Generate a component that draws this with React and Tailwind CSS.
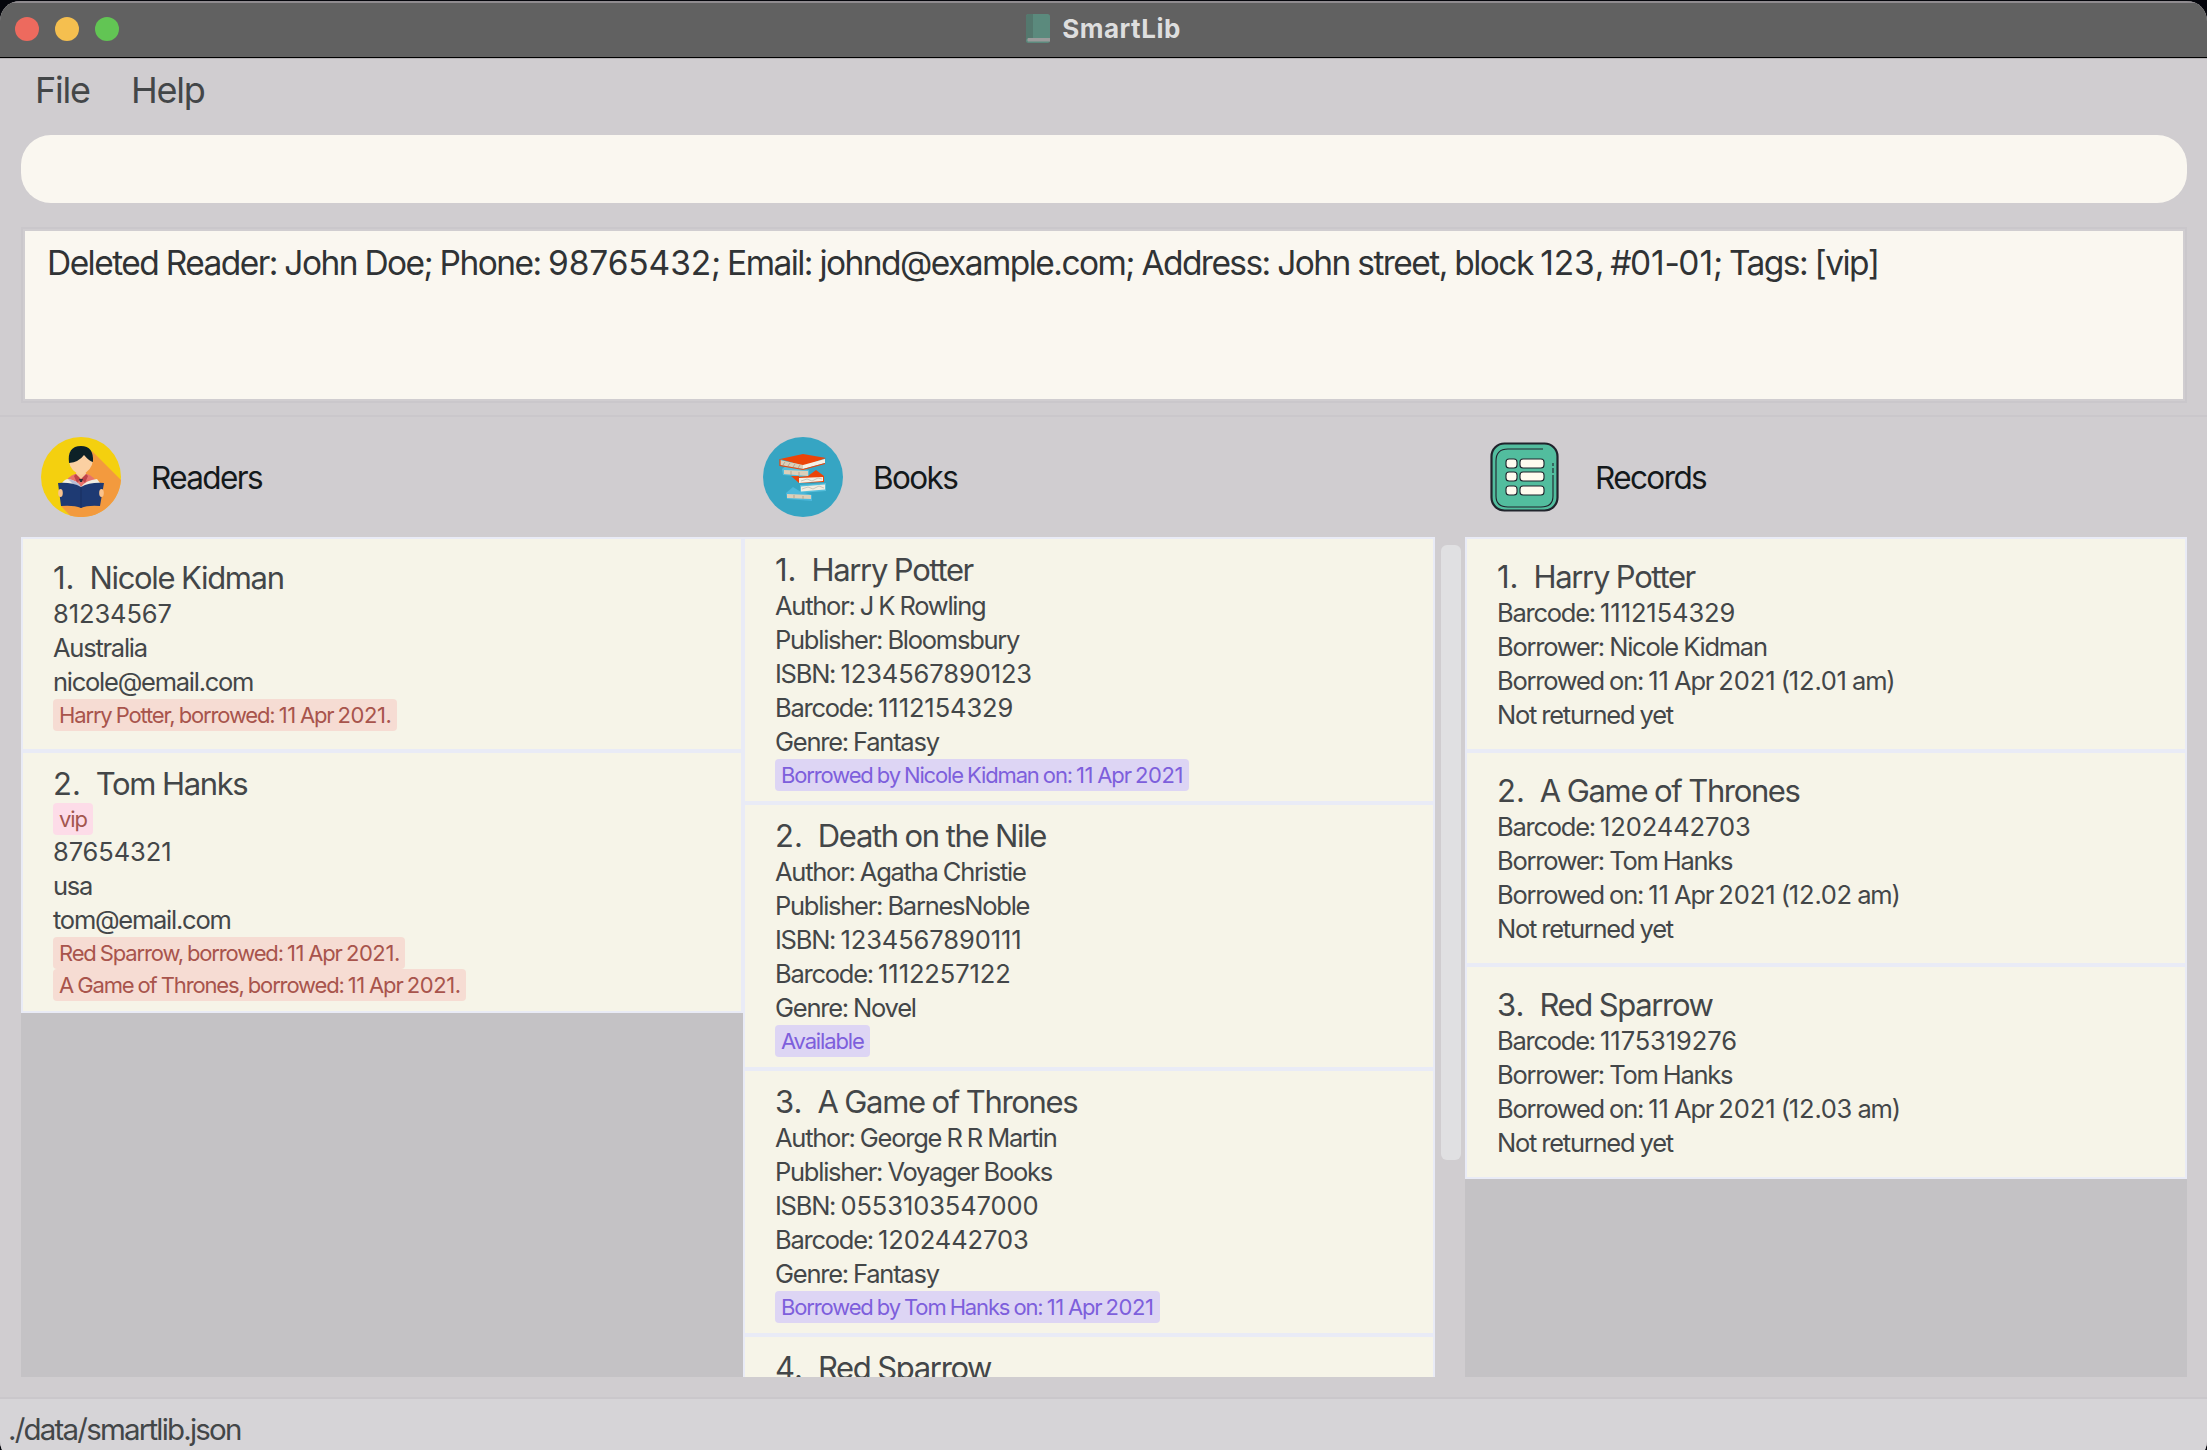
const readers = [
  {
    name: "Nicole Kidman",
    pad: "pt-[20px]",
    height: "h-[214px]",
    tags: [],
    lines: ["81234567", "Australia", "nicole@email.com"],
    loans: ["Harry Potter, borrowed: 11 Apr 2021."],
  },
  {
    name: "Tom Hanks",
    pad: "pt-[12px]",
    height: "h-[262px]",
    tags: ["vip"],
    lines: ["87654321", "usa", "tom@email.com"],
    loans: ["Red Sparrow, borrowed: 11 Apr 2021.", "A Game of Thrones, borrowed: 11 Apr 2021."],
  },
];

const books = [
  {
    name: "Harry Potter",
    lines: ["Author: J K Rowling", "Publisher: Bloomsbury", "ISBN: 1234567890123", "Barcode: 1112154329", "Genre: Fantasy"],
    status: "Borrowed by Nicole Kidman on: 11 Apr 2021",
  },
  {
    name: "Death on the Nile",
    lines: ["Author: Agatha Christie", "Publisher: BarnesNoble", "ISBN: 1234567890111", "Barcode: 1112257122", "Genre: Novel"],
    status: "Available",
  },
  {
    name: "A Game of Thrones",
    lines: ["Author: George R R Martin", "Publisher: Voyager Books", "ISBN: 0553103547000", "Barcode: 1202442703", "Genre: Fantasy"],
    status: "Borrowed by Tom Hanks on: 11 Apr 2021",
  },
  { name: "Red Sparrow", lines: [], status: null },
];

const records = [
  { name: "Harry Potter", lines: ["Barcode: 1112154329", "Borrower: Nicole Kidman", "Borrowed on: 11 Apr 2021 (12.01 am)", "Not returned yet"] },
  { name: "A Game of Thrones", lines: ["Barcode: 1202442703", "Borrower: Tom Hanks", "Borrowed on: 11 Apr 2021 (12.02 am)", "Not returned yet"] },
  { name: "Red Sparrow", lines: ["Barcode: 1175319276", "Borrower: Tom Hanks", "Borrowed on: 11 Apr 2021 (12.03 am)", "Not returned yet"] },
];

// Letters are set tight while runs of digits keep a looser tracking.
function Spaced({ text, digits }) {
  return text.split(/(\d+)/).map((part, i) =>
    i % 2 ? <span key={i} className={digits}>{part}</span> : part
  );
}

function Title({ index, name }) {
  return (
    <div className="flex h-[38px] gap-[15px] text-[31px] leading-[38px]">
      <span>{index}.</span>
      <span className="tracking-[-1.35px] [word-spacing:-0.5px]">{name}</span>
    </div>
  );
}

function Line({ children }) {
  return (
    <div className="h-[34px] text-[25.5px] leading-[34px] tracking-[-1.25px] [word-spacing:-0.7px]">
      <Spaced text={children} digits="tracking-[-0.1px]" />
    </div>
  );
}

function Tag({ children, tone }) {
  return (
    <div className="flex h-8">
      <span className={`rounded-[4px] px-[6px] text-[22px] leading-[32px] tracking-[-1.15px] [word-spacing:-0.9px] ${tone}`}>
        <Spaced text={children} digits="tracking-[-0.4px]" />
      </span>
    </div>
  );
}

function Card({ className, children }) {
  return (
    <article className={`shrink-0 border-2 border-[#e9ebf6] bg-[#f6f4e8] pl-[30px] ${className}`}>{children}</article>
  );
}

function ReaderIcon() {
  return (
    <svg viewBox="0 0 80 80" className="size-20">
      <circle cx="40" cy="40" r="40" fill="#f4d00f" />
      <path d="M51 14 L80 43 A40 40 0 0 1 29 78.500 L20 69 Z" fill="#f39a3e" />
      <path d="M24 47 Q27 39 34 37 L46 37 Q53 39 56 47 L40 54Z" fill="#e8736b" />
      <path d="M35 36h10v3l-5 5-5-5z" fill="#f9c99a" />
      <path d="M35 37l5 5-4 4-3-7zM45 37l-5 5 4 4 3-7z" fill="#c0444a" />
      <path d="M38 42h4l-1 3h-2z" fill="#2c2f38" />
      <path d="M28 21 Q28 10 40 10 Q52 10 52 23 Q51 34 40 38 Q29 34 28 24Z" fill="#fbd0a2" />
      <path d="M28 26 Q26 9 40 9 Q53 9 52 25 Q48 24 43 18 Q38 25 28 26Z" fill="#0d2127" />
      <path d="M21 46 Q24 42 27 42 Q36 43 40 50 Q45 43 56 42 L59 46 L40 52Z" fill="#f2efe2" />
      <path d="M27 42 Q36 43 40 50 L32 47 Z" fill="#b9bdd6" />
      <path d="M17 46 Q31 45 40 50 Q49 45 63 46 L59 69 Q47 68 40 71 Q33 68 20 69Z" fill="#1e3a73" />
      <path d="M40 50v21" stroke="#182f60" strokeWidth="1" />
      <ellipse cx="19.500" cy="56" rx="2.300" ry="4" fill="#fbc38c" />
      <ellipse cx="60.500" cy="56" rx="2.300" ry="4" fill="#fbc38c" />
    </svg>
  );
}

function BooksIcon() {
  return (
    <svg viewBox="0 0 80 80" className="size-20">
      <circle cx="40" cy="40" r="40" fill="#36a5c3" />
      <path d="M19 32l4-3 23 4v7l-26-2z" fill="#55bedb" />
      <path d="M21 33l24 1v5l-24-2z" fill="#dccfb9" />
      <path d="M17 22L40 17l23 4-22 8z" fill="#ec4408" />
      <path d="M17 23l23 5v4l-23-4z" fill="#dccfb9" />
      <path d="M40 28l22-6v4l-22 6z" fill="#f5f1e6" />
      <path d="M17 22v6.500l23 4L62 26.500" fill="none" stroke="#ec4408" strokeWidth="1.200" />
      <path d="M28 39h8v7zM45 39l8-6 8 6v6l-25 1v-6z" fill="#ec4408" />
      <path d="M36 41l24-1v4l-24 2z" fill="#f5f1e6" />
      <path d="M37 48l26-2v8l-26 2z" fill="#55bedb" />
      <path d="M38 49.500l24-2v5l-24 2z" fill="#f0ede2" />
      <path d="M39 52l6-2 5 2 6-3 5 2M38 44l6-2 5 2 6-3 4 1" fill="none" stroke="#b9b6ab" strokeWidth=".7" />
      <path d="M23 56l7-6 8 5 11 3v6l-25-2z" fill="#4bb8dc" />
      <path d="M24 57l24 1v4l-24-1z" fill="#dccfb9" />
      <path d="M22 25l-2 3M27 26l-2 3M32 27l-2 3M37 28l-2 3M28 34v4M36 35v4M31 58v3M40 59v3" stroke="#b8a68f" strokeWidth="1" />
    </svg>
  );
}

function RecordsIcon() {
  return (
    <svg viewBox="0 0 70 70" className="size-[70px]">
      <rect x="1.500" y="1.500" width="66" height="67" rx="13" fill="#52bd9e" stroke="#20242c" strokeWidth="2.200" />
      <path d="M53 7H18Q6 7 6 19v35q0 11 12 11h33q12 0 12-11V33M63 21v3M63 26v5" fill="none" stroke="#20242c" strokeWidth="1.100" />
      {[17, 30, 44].map((y) => (
        <g key={y} fill="#fffbef" stroke="#20242c" strokeWidth="1.100">
          <rect x="16" y={y} width="11" height="9" rx="3" />
          <rect x="30" y={y} width="24" height="9" rx="3" />
        </g>
      ))}
    </svg>
  );
}

function Heading({ icon, children, className }) {
  return (
    <div className={`flex h-[120px] items-center text-[31.5px] tracking-[-1.6px] text-[#14191b] ${className}`}>
      {icon}
      <h2 className="pt-px">{children}</h2>
    </div>
  );
}

export default function App() {
  return (
    <div className="h-[1450px] w-[2207px] overflow-hidden bg-[#05060c] pt-px font-['Inter',sans-serif] text-[#434648]">
      <div className="flex h-[1460px] flex-col overflow-hidden rounded-[20px] bg-[#d0cdd0]">
        <header className="flex h-[57px] shrink-0 items-center border-t-2 border-b border-t-[#8f8b8f] border-b-black bg-[#616161] px-[15px] pb-[3px]">
          <div className="flex flex-1 gap-4 pt-px">
            <span className="size-6 rounded-full bg-[#ed6a5e]" />
            <span className="size-6 rounded-full bg-[#f5bf4f]" />
            <span className="size-6 rounded-full bg-[#62c554]" />
          </div>
          <div className="flex items-center gap-[12px] text-[26px] font-bold tracking-[0.5px] text-[#dedede]">
            <svg viewBox="0 0 24 29" className="h-[29px] w-6">
              <rect width="24" height="29" rx="2.500" fill="#5b8a7d" />
              <path d="M0 2.500Q0 0 2.500 0H7v24H2Q1 24 0 26z" fill="#54786e" />
              <path d="M2 24h22v3.500H2Q.5 26 2 24z" fill="#9b9b9b" />
            </svg>
            <span>SmartLib</span>
          </div>
          <div className="flex-1" />
        </header>
        <nav className="flex h-[77px] shrink-0 gap-[41px] border-t border-[#b5b2b5] pt-[8px] pl-[35px] text-[36px] leading-[46px] tracking-[-1.2px]">
          <span>File</span>
          <span>Help</span>
        </nav>
        <div className="mr-5 ml-[21px] h-[68px] shrink-0 rounded-[30px] bg-[#faf7f0]" />
        <div className="mt-6 mr-5 ml-[21px] h-[176px] shrink-0 border-2 border-[#cac7cb] p-[2px]">
          <div className="h-full bg-[#faf7f0] px-[22px] pt-[10px] text-[33.500px] leading-[44px] tracking-[-1.55px] text-[#303335] [word-spacing:-0.4px]">
            <Spaced
              text="Deleted Reader: John Doe; Phone: 98765432; Email: johnd@example.com; Address: John street, block 123, #01-01; Tags: [vip]"
              digits="tracking-[-0.1px]"
            />
          </div>
        </div>
        <main className="mt-3 flex h-[962px] shrink-0 border-t-2 border-[#cac7cb] pr-5 pl-[21px]">
          <section className="w-[722px]">
            <Heading icon={<ReaderIcon />} className="gap-[30px] pl-5">Readers</Heading>
            <div className="flex h-[840px] flex-col overflow-hidden bg-[#c4c2c5]">
              {readers.map((r, i) => (
                <Card key={r.name} className={`${r.height} ${r.pad}`}>
                  <Title index={i + 1} name={r.name} />
                  {r.tags.map((t) => <Tag key={t} tone="bg-[#fddce8] text-[#a3564e]">{t}</Tag>)}
                  {r.lines.map((l) => <Line key={l}>{l}</Line>)}
                  {r.loans.map((l) => <Tag key={l} tone="bg-[#f6dcd3] text-[#a8544c]">{l}</Tag>)}
                </Card>
              ))}
            </div>
          </section>
          <section className="w-[722px]">
            <Heading icon={<BooksIcon />} className="gap-[30px] pl-5">Books</Heading>
            <div className="flex h-[840px]">
              <div className="flex w-[692px] flex-col overflow-hidden">
                {books.map((b, i) => (
                  <Card key={b.name} className="h-[266px] pt-3">
                    <Title index={i + 1} name={b.name} />
                    {b.lines.map((l) => <Line key={l}>{l}</Line>)}
                    {b.status && <Tag tone="bg-[#ddd5f4] text-[#7d5fdc]">{b.status}</Tag>}
                  </Card>
                ))}
              </div>
              <div className="mt-2 ml-[6px] h-[615px] w-5 rounded-[6px] bg-[#e0e0e2]" />
            </div>
          </section>
          <section className="w-[722px]">
            <Heading icon={<RecordsIcon />} className="gap-[35px] pl-[25px]">Records</Heading>
            <div className="flex h-[840px] flex-col overflow-hidden bg-[#c4c2c5]">
              {records.map((r, i) => (
                <Card key={r.name} className="h-[214px] pt-[19px]">
                  <Title index={i + 1} name={r.name} />
                  {r.lines.map((l) => <Line key={l}>{l}</Line>)}
                </Card>
              ))}
            </div>
          </section>
        </main>
        <footer className="mt-5 flex-1 border-t-2 border-[#cac7cb] bg-[#d6d4d7] pt-[9px] pl-2 text-[29.500px] leading-[42px] tracking-[-1.8px]">
          ./data/smartlib.json
        </footer>
      </div>
    </div>
  );
}
